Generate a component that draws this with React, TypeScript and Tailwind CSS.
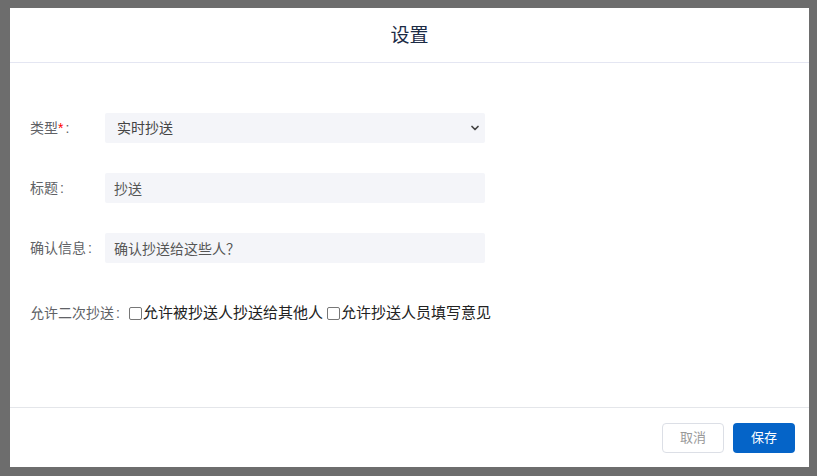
import { ChevronDown } from "lucide-react";

const font = { fontFamily: '"Liberation Sans", "Noto Sans CJK SC", sans-serif' };

function Row({ label, required, children }: { label: string; required?: boolean; children: React.ReactNode }) {
  return (
    <div className="flex items-center h-[30px]">
      <div className="w-[75px] text-[14px] text-[#606266]">
        {label}
        {required && <span className="text-[#f00]">*</span>}
        <span className="ml-[2px]">:</span>
      </div>
      {children}
    </div>
  );
}

export default function App() {
  return (
    <div className="w-[817px] h-[476px] bg-[#6d6d6d] pt-[8px] pl-[10px] overflow-hidden" style={font}>
      <div className="w-[799px] h-[459px] bg-white flex flex-col">
        <header className="h-[55px] border-b border-[#e4e6f2] flex items-center justify-center">
          <h1 className="text-[19px] text-[#1c2b45] leading-none">设置</h1>
        </header>

        <main className="flex-1 px-[20px] pt-[50px] flex flex-col gap-[30px]">
          <Row label="类型" required>
            <div className="relative w-[380px] h-[30px]">
              <select className="appearance-none w-full h-full bg-[#f4f5f9] rounded-[2px] pl-[12px] text-[14px] text-[#444] outline-none">
                <option>实时抄送</option>
              </select>
              <ChevronDown className="absolute right-[4px] top-[9px] w-[12px] h-[12px] text-[#444]" strokeWidth={3.5} />
            </div>
          </Row>
          <Row label="标题">
            <input
              className="w-[380px] h-[30px] bg-[#f4f5f9] rounded-[2px] pl-[9px] text-[14px] text-[#555] outline-none"
              defaultValue="抄送"
            />
          </Row>
          <Row label="确认信息">
            <input
              className="w-[380px] h-[30px] bg-[#f4f5f9] rounded-[2px] pl-[9px] text-[14px] text-[#555] outline-none"
              defaultValue="确认抄送给这些人？"
            />
          </Row>

          <div className="flex items-center mt-[10px] h-[20px]">
            <span className="text-[14px] text-[#606266]">
              允许二次抄送<span className="ml-[2px] mr-[9px]">:</span>
            </span>
            <label className="flex items-center text-[15px] text-[#222]">
              <input type="checkbox" className="appearance-none w-[13px] h-[13px] border border-[#777] rounded-[2px] mr-[1px]" />
              允许被抄送人抄送给其他人
            </label>
            <label className="flex items-center text-[15px] text-[#222] ml-[4px]">
              <input type="checkbox" className="appearance-none w-[13px] h-[13px] border border-[#777] rounded-[2px] mr-[1px]" />
              允许抄送人员填写意见
            </label>
          </div>
        </main>

        <footer className="h-[60px] border-t border-[#e4e6ea] flex items-center justify-end gap-[9px] pr-[14px]">
          <button className="w-[62px] h-[30px] border border-[#dcdfe6] rounded-[4px] text-[13px] text-[#999]">取消</button>
          <button className="w-[62px] h-[30px] bg-[#0564c8] rounded-[4px] text-[13px] text-white">保存</button>
        </footer>
      </div>
    </div>
  );
}
